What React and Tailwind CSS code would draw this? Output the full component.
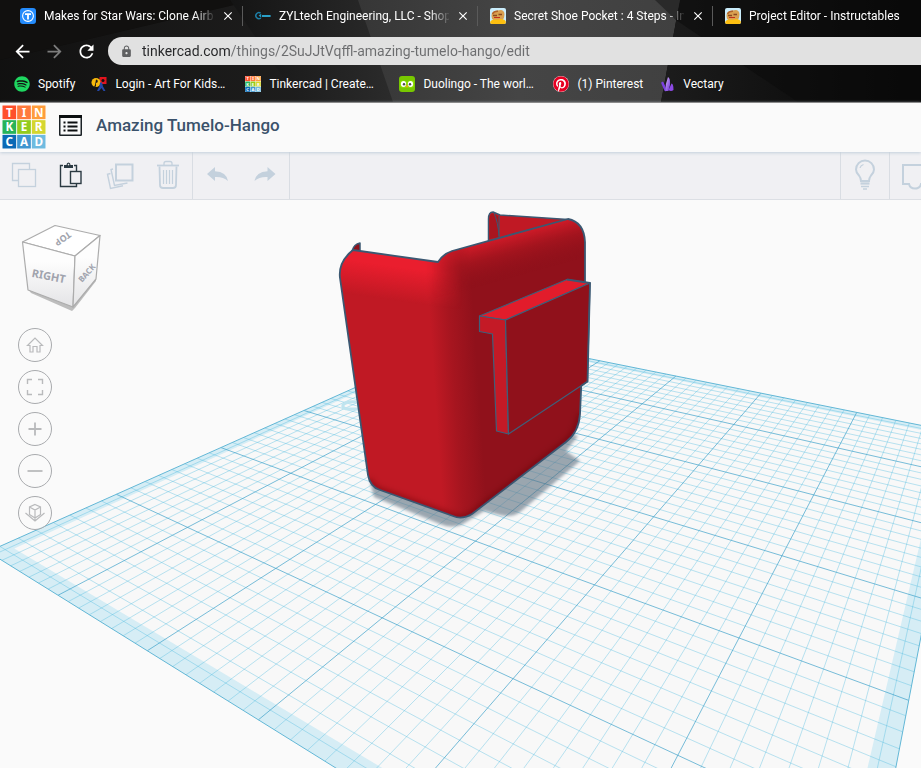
import { FaPinterest, FaSpotify } from 'react-icons/fa'
import { MdArrowBack, MdArrowForward, MdClose, MdLock, MdRefresh } from 'react-icons/md'

/* ---------- favicons ---------- */

function ThingiverseIcon() {
    return (
        <svg viewBox="0 0 16 16" className="h-4 w-4 shrink-0" aria-hidden="true">
            <rect width="16" height="16" rx="3" fill="#248bfb" />
            <circle cx="8" cy="8" r="5.4" fill="none" stroke="#fff" strokeWidth="1.1" />
            <path d="M5 5.3h6v1.6H8.9v4.6H7.1V6.9H5z" fill="#fff" />
        </svg>
    )
}

function ZylIcon() {
    return (
        <svg viewBox="0 0 16 16" className="h-4 w-4 shrink-0" aria-hidden="true">
            <path d="M5.6 5.2A3 3 0 1 0 5.8 10" fill="none" stroke="#1d7ea6" strokeWidth="1.5" />
            <path d="M3.600 7.500l2.600-1.700v4z" fill="#1d9ac6" />
            <path d="M7 8h8.600" stroke="#2aa0c8" strokeWidth="2" />
        </svg>
    )
}

function InstructablesIcon() {
    return (
        <svg viewBox="0 0 16 16" className="h-4 w-4 shrink-0" aria-hidden="true">
            <rect width="16" height="16" rx="2" fill="#c9ecfb" />
            <path d="M1.500 8Q1.500 3 6 2.800L11 2q3.500.5 3.500 4.500 0 3.500-2 5.500H3.500Q1.500 11 1.500 8z" fill="#d9a050" />
            <path d="M2.500 6Q4 3 8 3.200" fill="none" stroke="#b0622c" strokeWidth="1.400" />
            <path d="M3 7.500h4M8.500 6.500h3.500" stroke="#8a4a20" strokeWidth="1.300" />
            <path d="M4 9.500h6" stroke="#c22f1c" strokeWidth="1" />
            <path d="M0 14Q1.500 11 5 11.500q3 .5 6-.5 4 0 5 3a2 2 0 0 1-2 2H2a2 2 0 0 1-2-2z" fill="#fdbf10" />
        </svg>
    )
}

function ArtHubIcon() {
    return (
        <svg viewBox="0 0 16 16" className="h-4 w-4 shrink-0" aria-hidden="true">
            <rect x="8.500" y="1" width="7" height="7" fill="#e3141d" />
            <circle cx="12" cy="4.500" r="1.500" fill="#111" />
            <circle cx="5" cy="6.500" r="4.500" fill="#f7b90c" />
            <path d="M5 3.500a1.800 1.800 0 0 1 0 3.600v3l-1.500 2H2.500l1.500-3z" fill="#1b1b1b" />
            <path d="M9 6.500l2 0 1 4 2.500 4.500h-2l-2-3-2.500 3H6l2.500-5z" fill="#2447a8" />
        </svg>
    )
}

const LOGO_TILES = [
    ['T', '#ff4f2b'], ['I', '#ff7a3c'], ['N', '#ff9d3c'],
    ['K', '#27b35a'], ['E', '#93cb1c'], ['R', '#d5d62f'],
    ['C', '#0a6ab6'], ['A', '#3f96d0'], ['D', '#6fbbe0'],
]

function TinkercadLogo({ className }) {
    return (
        <svg viewBox="0 0 45 45" className={className} role="img" aria-label="Tinkercad">
            <rect width="45" height="45" fill="#fff" />
            {LOGO_TILES.map(([letter, color], i) => {
                const x = (i % 3) * 15
                const y = Math.floor(i / 3) * 15
                return (
                    <g key={letter}>
                        <rect x={x + 0.5} y={y + 0.5} width="14" height="14" fill={color} />
                        <text
                            x={x + 7.5}
                            y={y + 12}
                            textAnchor="middle"
                            fontSize="12"
                            className="fill-white font-['Noto_Sans','Open_Sans',sans-serif] font-bold"
                        >
                            {letter}
                        </text>
                    </g>
                )
            })}
        </svg>
    )
}

function DuolingoIcon() {
    return (
        <svg viewBox="0 0 16 16" className="h-4 w-4 shrink-0" aria-hidden="true">
            <rect width="16" height="16" rx="3" fill="#78c800" />
            <path d="M1 5.500Q4 3.500 8 6q4-2.500 7-.5v5q-3 2.500-7 .5-4 2-7-.5z" fill="#8ee000" />
            <ellipse cx="4.500" cy="8" rx="2.600" ry="3" fill="#fff" />
            <ellipse cx="11.500" cy="8" rx="2.600" ry="3" fill="#fff" />
            <circle cx="5" cy="8.200" r="1.200" fill="#4b4b4b" />
            <circle cx="11" cy="8.200" r="1.200" fill="#4b4b4b" />
            <path d="M6.500 9.600h3L8 12z" fill="#f9a01b" />
        </svg>
    )
}

function PinterestIcon() {
    return (
        <span className="h-4 w-4 shrink-0 rounded-full bg-white">
            <FaPinterest size={16} className="text-[#e60023]" />
        </span>
    )
}

function VectaryIcon() {
    return (
        <svg viewBox="0 0 16 16" className="h-4 w-4 shrink-0" aria-hidden="true">
            <defs>
                <linearGradient id="vectary" x1="0" y1="0" x2="1" y2="1">
                    <stop offset="0" stopColor="#d9b6f5" />
                    <stop offset="1" stopColor="#6a2fd8" />
                </linearGradient>
            </defs>
            <path d="M3.500 7l3 7" stroke="#7b3fe0" strokeWidth="2.500" strokeLinecap="round" />
            <path d="M6.500 15Q6 8 9 1 11.500 2 11 9L9.500 15z" fill="url(#vectary)" />
            <path d="M9.500 14L12.500 7.500q2 0 2 6.500-2.500 2-5 0z" fill="#8d4ae6" />
        </svg>
    )
}

/* ---------- browser chrome ---------- */

const TABS = [
    { title: 'Makes for Star Wars: Clone Airb', icon: ThingiverseIcon },
    { title: 'ZYLtech Engineering, LLC - Shop', icon: ZylIcon },
    { title: 'Secret Shoe Pocket : 4 Steps - In', icon: InstructablesIcon },
    { title: 'Project Editor - Instructables', icon: InstructablesIcon },
]

const BOOKMARKS = [
    { label: 'Spotify', icon: () => <FaSpotify size={16} className="shrink-0 text-[#1ed760]" /> },
    { label: 'Login - Art For Kids…', icon: ArtHubIcon, cut: true },
    { label: 'Tinkercad | Create…', icon: () => <TinkercadLogo className="h-4 w-4 shrink-0" />, cut: true },
    { label: 'Duolingo - The worl…', icon: DuolingoIcon, cut: true },
    { label: '(1) Pinterest', icon: PinterestIcon },
    { label: 'Vectary', icon: VectaryIcon },
]

function ThemeBackdrop() {
    return (
        <svg
            viewBox="0 0 921 102"
            preserveAspectRatio="none"
            className="absolute inset-0 -z-10 h-full w-full"
            aria-hidden="true"
        >
            <defs>
                <linearGradient id="themeMid" x1="0" x2="1">
                    <stop offset="0" stopColor="#141414" />
                    <stop offset="1" stopColor="#2c2c2c" />
                </linearGradient>
                <linearGradient id="themeLit" x1="0" x2="1">
                    <stop offset="0" stopColor="#363636" />
                    <stop offset="0.5" stopColor="#454545" />
                    <stop offset="1" stopColor="#404040" />
                </linearGradient>
                <linearGradient id="themeRight" x1="0" x2="1">
                    <stop offset="0" stopColor="#1c1c1c" />
                    <stop offset="1" stopColor="#050505" />
                </linearGradient>
            </defs>
            <rect width="921" height="102" fill="#0a0908" />
            <path d="M0 60L234 5 230 0H0z" fill="#11100f" />
            <path d="M234 5L400 0V102H150L0 102V60z" fill="url(#themeMid)" opacity="0.7" />
            <path d="M230 0H400V102H300z" fill="url(#themeMid)" />
            <path d="M358 0H680L661 102H393z" fill="url(#themeLit)" />
            <path d="M680 0H921V102H661z" fill="url(#themeRight)" />
            <path d="M660 0L921 0V102H798L676 20z" fill="#0b0b0b" opacity="0.6" />
            <path d="M655 0H680L676 20z" fill="#2a2a2a" />
        </svg>
    )
}

function BrowserTab({ title, icon: Icon }) {
    return (
        <div className="flex h-8 w-[235px] shrink-0 items-center pl-3">
            <Icon />
            <a
                href="#tab"
                className="ml-2 w-[170px] shrink-0 whitespace-nowrap text-xs text-white mask-[linear-gradient(90deg,#000_150px,transparent_172px)]"
            >
                {title}
            </a>
            <button type="button" aria-label="Close tab" className="ml-[7px] text-white">
                <MdClose size={14} />
            </button>
            <span className="ml-auto h-5 w-px bg-[#5a5a5a]" />
        </div>
    )
}

function BrowserChrome() {
    return (
        <header className="relative isolate overflow-hidden font-[Roboto,sans-serif]">
            <ThemeBackdrop />
            <div className="flex overflow-hidden pl-2">
                {TABS.map((tab) => (
                    <BrowserTab key={tab.title} {...tab} />
                ))}
            </div>

            <div className="mt-[5px] flex items-center pl-1.5">
                <button type="button" aria-label="Back" className="flex w-8 justify-center text-white">
                    <MdArrowBack size={21} />
                </button>
                <button type="button" aria-label="Forward" className="flex w-8 justify-center text-[#7d7d7d]">
                    <MdArrowForward size={21} />
                </button>
                <button type="button" aria-label="Reload" className="flex w-8 justify-center text-white">
                    <MdRefresh size={21} />
                </button>
                <div className="ml-1.5 flex h-7 flex-1 items-center rounded-l-full bg-[#e1e1e1] pl-3">
                    <MdLock size={13} className="text-[#5f6062]" />
                    <input
                        type="text"
                        aria-label="Address"
                        defaultValue="tinkercad.com/things/2SuJJtVqffl-amazing-tumelo-hango/edit"
                        className="ml-[9px] h-7 flex-1 bg-[linear-gradient(90deg,#252628_88px,#6c6d6f_88px)] bg-clip-text text-sm text-transparent outline-none"
                    />
                </div>
            </div>

            <nav className="flex h-[37px] items-center gap-4 pl-3.5">
                {BOOKMARKS.map(({ label, icon: Icon, cut }) => (
                    <a key={label} href="#bookmark" className="flex shrink-0 items-center gap-2 text-xs text-white">
                        <Icon />
                        <span className={cut ? 'w-[114px] whitespace-nowrap' : 'whitespace-nowrap'}>{label}</span>
                    </a>
                ))}
            </nav>
        </header>
    )
}

/* ---------- editor bars ---------- */

function TitleBar() {
    return (
        <div className="relative z-10 flex h-[50px] items-center border-t border-[#8b8b8b] bg-[#fafafa] pb-0.5 pl-0.5 shadow-[0_1px_3px_#c3cfdb]">
            <a href="#home" className="shrink-0">
                <TinkercadLogo className="h-11 w-11" />
            </a>
            <button type="button" aria-label="Designs" className="ml-[13px] pb-0.5">
                <svg viewBox="0 0 23 21" className="h-[21px] w-[23px]" fill="none">
                    <rect x="0.750" y="0.750" width="21.500" height="19.500" rx="0.500" stroke="#1b2226" strokeWidth="1.500" />
                    <path d="M0 1.500h23" stroke="#0c0f10" strokeWidth="3" />
                    <path d="M4.500 7.500h2M4.500 11.500h2M4.500 15.500h2M8.500 7.500h10M8.500 11.500h10M8.500 15.500h10" stroke="#0c0f10" strokeWidth="2" />
                </svg>
            </button>
            <h1 className="ml-3.5 pb-1 font-[Roboto,sans-serif] text-[17px] leading-6 font-medium text-[#3a526b]">
                Amazing Tumelo-Hango
            </h1>
        </div>
    )
}

function ToolButton({ label, dark, children }) {
    return (
        <button type="button" aria-label={label} className={dark ? 'text-[#2b3a42]' : 'text-[#c4d1dd]'}>
            <svg viewBox="0 0 48 47" className="h-[47px] w-12" fill="none" stroke="currentColor">
                {children}
            </svg>
        </button>
    )
}

function Toolbar() {
    return (
        <div className="flex h-12 overflow-hidden border-b border-[#dcdfe4] bg-[#f0f0f3]">
            <div className="flex">
                <ToolButton label="Copy">
                    <path d="M18 28.500H12.500V11.500H29.500V17" strokeWidth="1.300" />
                    <rect x="18.500" y="17.500" width="17" height="17" strokeWidth="1.300" />
                </ToolButton>
                <ToolButton label="Paste" dark>
                    <path d="M15 13.500H12.500V34.500H28.500V32M26 13.500H28.500V19" strokeWidth="1.400" />
                    <path d="M16 16V13h2.500q0-2.500 2-2.500t2 2.500H25v3z" fill="currentColor" stroke="none" />
                    <circle cx="20.500" cy="12.600" r="0.800" fill="#f0f0f3" stroke="none" />
                    <rect x="22.500" y="19.500" width="10.500" height="12" strokeWidth="1.400" fill="#f0f0f3" />
                </ToolButton>
                <ToolButton label="Duplicate">
                    <path d="M17 17L15 17.500 18.500 33.500 31.500 31" strokeWidth="1.400" />
                    <path d="M14.500 21.500L11.500 22.200 14.500 36.500 27 33.800" strokeWidth="1.400" />
                    <rect x="20" y="12.500" width="16.500" height="16" strokeWidth="2" />
                </ToolButton>
                <ToolButton label="Delete">
                    <path d="M13 13.500h22" strokeWidth="1.800" />
                    <path d="M20 13V11.500q0-2 2-2h4q2 0 2 2V13" strokeWidth="1.300" />
                    <path d="M15.500 14.500L16 33q0 3 3 3h10q3 0 3-3l.5-18.500" strokeWidth="1.800" />
                    <path d="M19.500 18v14M22.500 18v14M25.500 18v14M28.500 18v14" strokeWidth="1.200" />
                </ToolButton>
            </div>
            <div className="flex border-x border-[#d9dde3]">
                <ToolButton label="Undo">
                    <path d="M14 22l8-7v4.300Q33.500 20 35 29 30 24.500 22 25v4z" fill="currentColor" stroke="none" />
                </ToolButton>
                <ToolButton label="Redo">
                    <path d="M34.500 22l-8-7v4.300Q15 20 13.500 29 18.500 24.500 26.500 25v4z" fill="currentColor" stroke="none" />
                </ToolButton>
            </div>
            <div className="ml-auto flex border-x border-[#d9dde3]">
                <ToolButton label="Show tips">
                    <path d="M20 29q0-3-2-5.500-3-3-3-6a9 9 0 0 1 18 0q0 3-3 6-2 2.500-2 5.500z" strokeWidth="2" />
                    <path d="M19 16q.5-2.500 3.500-3.500" strokeWidth="1.200" />
                    <path d="M19.500 31.500h9" strokeWidth="2.200" />
                    <path d="M20 34.500h8M22 37h4" strokeWidth="1.500" />
                </ToolButton>
            </div>
            <button type="button" aria-label="Notes" className="w-[31px] overflow-hidden text-[#c4d1dd]">
                <svg viewBox="0 0 48 47" className="h-[47px] w-12" fill="none" stroke="currentColor" strokeWidth="2">
                    <path d="M13 13h24v19h-6q-1 4.500-6 4.500T19 32h-6z" />
                </svg>
            </button>
        </div>
    )
}

/* ---------- workplane ---------- */

// Grid position in inches -> scene position in pixels
const ANCHORS = [
    [2, -2, 838.3, 448], [2, -1, 814, 495], [2, 0, 781.7, 555.7], [2, 1, 739, 637.7], [2, 2, 677.7, 755],
    [1, -2, 735, 425], [1, -1, 698.3, 465.3], [1, 0, 654.7, 516.7], [0, -2, 641.7, 403.3], [0, -1, 599, 439.3],
    [-2, 2, 187.3, 527.3], [-1, 2, 275.7, 568.3], [-2, 2.953, 58.3, 595.7], [-1, 2.953, 146.7, 651],
    [0, 2.953, 258.3, 719.3], [-2.953, 2, 116.7, 494.3], [2.953, 1, 908.3, 700.7],
    [-1, -2.953, 600, 360.7], [0, -2.953, 675.7, 376], [1, -2.953, 760.3, 393.3], [2, -2.953, 856.7, 412.3],
]

// Least squares fit of the eight projection coefficients
function fitProjection(anchors) {
    const rows = []
    anchors.forEach(([u, v, x, y]) => {
        rows.push([u, v, 1, 0, 0, 0, -u * x, -v * x, x])
        rows.push([0, 0, 0, u, v, 1, -u * y, -v * y, y])
    })
    const m = Array.from({ length: 8 }, (_, i) =>
        Array.from({ length: 9 }, (_, j) => rows.reduce((sum, r) => sum + r[i] * r[j], 0))
    )
    for (let i = 0; i < 8; i++) {
        let p = i
        for (let r = i + 1; r < 8; r++) if (Math.abs(m[r][i]) > Math.abs(m[p][i])) p = r
        ;[m[i], m[p]] = [m[p], m[i]]
        for (let r = 0; r < 8; r++) {
            if (r === i) continue
            const f = m[r][i] / m[i][i]
            for (let c = i; c < 9; c++) m[r][c] -= f * m[i][c]
        }
    }
    return m.map((row, i) => row[8] / row[i])
}

const H = fitProjection(ANCHORS)
const EDGE = 2.953 // half of a 150 mm plate
const INNER = EDGE - 0.12

function point(u, v) {
    const w = H[6] * u + H[7] * v + 1
    return `${((H[0] * u + H[1] * v + H[2]) / w).toFixed(2)} ${((H[3] * u + H[4] * v + H[5]) / w).toFixed(2)}`
}

function square(s) {
    return `M${point(-s, -s)}L${point(s, -s)}L${point(s, s)}L${point(-s, s)}z`
}

function gridPath(major) {
    let d = ''
    for (let i = -23; i <= 23; i++) {
        if ((i % 8 === 0) !== major) continue
        const k = i / 8
        d += `M${point(k, -EDGE)}L${point(k, EDGE)}M${point(-EDGE, k)}L${point(EDGE, k)}`
    }
    return d
}

function Workplane() {
    return (
        <g fill="none">
            <path d={square(EDGE)} fill="#f8f8f8" />
            <path d={square(EDGE) + square(INNER)} fill="#d6edf5" fillRule="evenodd" />
            <path d={gridPath(false)} stroke="#4dbbdf" strokeOpacity="0.38" />
            <path d={gridPath(true)} stroke="#3a9fc8" strokeOpacity="0.68" />
            <path d={square(EDGE)} stroke="#62b7d6" />
            <path d="M356 402q-9-1-13 3-1 4 6 4h10" stroke="#bfe4ef" strokeWidth="3" />
        </g>
    )
}

const BODY =
    'M353 250Q338 262 340 278L368 475Q370 487 380 490L453 516Q462 520 472 514L566 442Q579 432 580 414L585 300V242Q584 222 568 219L452 251Q443 254 438 262z'

function PhoneHolder() {
    return (
        <g strokeLinejoin="round">
            <defs>
                <clipPath id="bodyClip">
                    <path d={BODY} />
                </clipPath>
                <linearGradient id="side" gradientUnits="userSpaceOnUse" x1="434" y1="380" x2="478" y2="377">
                    <stop offset="0" stopColor="#c01924" />
                    <stop offset="0.45" stopColor="#a6151f" />
                    <stop offset="1" stopColor="#90111b" />
                </linearGradient>
                <linearGradient id="leftLight" gradientUnits="userSpaceOnUse" x1="396" y1="258" x2="390" y2="300">
                    <stop offset="0.2" stopColor="#ea1e2e" />
                    <stop offset="1" stopColor="#ea1e2e" stopOpacity="0" />
                </linearGradient>
                <linearGradient id="rimLight" gradientUnits="userSpaceOnUse" x1="510" y1="235" x2="521" y2="275">
                    <stop offset="0" stopColor="#d01b28" />
                    <stop offset="0.4" stopColor="#a8151f" stopOpacity="0.8" />
                    <stop offset="1" stopColor="#90111b" stopOpacity="0" />
                </linearGradient>
                <linearGradient id="fadeRight" gradientUnits="userSpaceOnUse" x1="425" x2="462" y1="0" y2="0">
                    <stop offset="0" stopColor="#fff" />
                    <stop offset="1" stopColor="#000" />
                </linearGradient>
                <linearGradient id="fadeLeft" gradientUnits="userSpaceOnUse" x1="432" x2="470" y1="0" y2="0">
                    <stop offset="0" stopColor="#000" />
                    <stop offset="1" stopColor="#fff" />
                </linearGradient>
                <mask id="leftMask">
                    <rect x="330" y="200" width="270" height="330" fill="url(#fadeRight)" />
                </mask>
                <mask id="rightMask">
                    <rect x="330" y="200" width="270" height="330" fill="url(#fadeLeft)" />
                </mask>
                <filter id="soft" x="-20%" y="-20%" width="140%" height="140%">
                    <feGaussianBlur stdDeviation="3" />
                </filter>
                <filter id="shadowSoft" x="-20%" y="-20%" width="140%" height="140%">
                    <feGaussianBlur stdDeviation="1.5" />
                </filter>
            </defs>

            {/* shadow on the plane */}
            <path
                d="M370 482L374 497 440 524Q455 530 466 522L484 511 500 515Q512 518 520 512L580 461 566 451 578 436 560 430 460 490z"
                fill="#5d7080"
                opacity="0.6"
                filter="url(#shadowSoft)"
            />

            {/* far clip and small lip */}
            <path d="M488.500 242V219Q488.500 212 493 212L500 215 568 219.500 500 240z" fill="#c01924" stroke="#3b5872" strokeWidth="1.500" />
            <path d="M489.500 239V219Q490 213 494 214L499 217V237z" fill="#a9151f" />
            <path d="M494 213Q498 222 499 236M499 216V238" fill="none" stroke="#3b5872" />
            <path d="M352 251Q354 244 360 243V251z" fill="#90111b" stroke="#3b5872" strokeWidth="1.500" />

            <path d={BODY} fill="url(#side)" />
            <g clipPath="url(#bodyClip)">
                <rect x="330" y="200" width="270" height="110" fill="url(#leftLight)" mask="url(#leftMask)" />
                <path d="M425 200H600V310H425z" fill="url(#rimLight)" mask="url(#rightMask)" />
                <path
                    d="M368 480Q371 489 380 492L453 518Q462 522 472 516L566 444Q579 434 582 414"
                    fill="none"
                    stroke="#5c0a10"
                    strokeOpacity="0.5"
                    strokeWidth="8"
                    filter="url(#soft)"
                />
            </g>
            <path d={BODY} fill="none" stroke="#3b5872" strokeWidth="1.800" />

            {/* raised pocket */}
            <g stroke="#3f5f7a" strokeWidth="1.200">
                <path d="M479.500 316L567 279.500 590 283 505.500 320z" fill="#e21c2b" />
                <path d="M479.500 316L505.500 320 508.500 434 496.500 431 492.500 334 479.500 331.500z" fill="#c41a26" />
                <path d="M505.500 320L590 283 587.500 381.500 508.500 434z" fill="#90111b" />
            </g>
            <path d="M567 279.500L590 283 587.500 381.500 581 386" fill="none" stroke="#3b5872" strokeWidth="1.800" />
        </g>
    )
}

function ViewCube() {
    return (
        <svg viewBox="18 218 88 96" className="mb-1.5 h-24 w-[88px]" strokeLinejoin="round" role="img" aria-label="View cube">
            <defs>
                <linearGradient id="cubeFace" x1="0" y1="0" x2="0" y2="1">
                    <stop offset="0.3" stopColor="#fdfdfd" />
                    <stop offset="1" stopColor="#e4e4e6" />
                </linearGradient>
            </defs>
            <path d="M28 289L31 293 72 311 75 308 96 281V277L73 306z" fill="#bdbdbd" />
            <g stroke="#acacac" strokeWidth="1.200">
                <path d="M22.500 242L55 225.500 100 235.500 75 256z" fill="#fff" />
                <path d="M22.500 242L75 256 73 307 28 290z" fill="url(#cubeFace)" />
                <path d="M75 256L100 235.500 96 279 73 307z" fill="url(#cubeFace)" />
            </g>
            <g className="fill-[#a0a3ad] font-['Noto_Sans',sans-serif] font-bold" textAnchor="middle">
                <text fontSize="11" transform="translate(48 280) rotate(11)">RIGHT</text>
                <text fontSize="8" transform="translate(89 275) rotate(-48)">BACK</text>
                <text fontSize="9" transform="translate(61 236) rotate(145)">TOP</text>
            </g>
        </svg>
    )
}

const VIEW_BUTTONS = [
    { label: 'Home view', d: 'M9.500 17.500L17 10l7.500 7.500h-2.500V24h-3v-5.500h-4V24h-3v-6.500z', width: 1.2 },
    { label: 'Fit all in view', d: 'M9.500 14V9.500H14M20 9.500h4.500V14M24.500 20v4.500H20M14 24.500H9.500V20', width: 1.4 },
    { label: 'Zoom in', d: 'M17 10.500v13M10.500 17h13', width: 1.8 },
    { label: 'Zoom out', d: 'M9.500 17h15', width: 1.8 },
    {
        label: 'Switch projection',
        d: 'M17 8.500l5.500 2.500v7.500L17 22l-5.500-3.500V11zM11.500 11l5.500 3 5.500-3M17 14v11M7.500 17l9.500 8 9.500-8',
        width: 1.2,
    },
]

function Viewport() {
    return (
        <main className="relative flex-1 overflow-hidden bg-[#fafafa]">
            <svg
                viewBox="0 200 921 568"
                preserveAspectRatio="xMinYMin slice"
                className="absolute inset-0 h-full w-full"
                role="img"
                aria-label="3D design"
            >
                <Workplane />
                <PhoneHolder />
            </svg>

            <div className="absolute top-[18px] left-[18px] flex flex-col items-start gap-2">
                <ViewCube />
                {VIEW_BUTTONS.map(({ label, d, width }) => (
                    <button
                        key={label}
                        type="button"
                        aria-label={label}
                        className="h-[34px] w-[34px] rounded-full border border-[#a9abae] bg-[#fafafa]/60"
                    >
                        <svg viewBox="1 1 32 32" className="h-8 w-8" fill="none" stroke="#b9babc" strokeWidth={width}>
                            <path d={d} />
                        </svg>
                    </button>
                ))}
            </div>
        </main>
    )
}

export default function App() {
    return (
        <div className="flex min-h-screen flex-col bg-[#fafafa]">
            <BrowserChrome />
            <TitleBar />
            <Toolbar />
            <Viewport />
        </div>
    )
}
